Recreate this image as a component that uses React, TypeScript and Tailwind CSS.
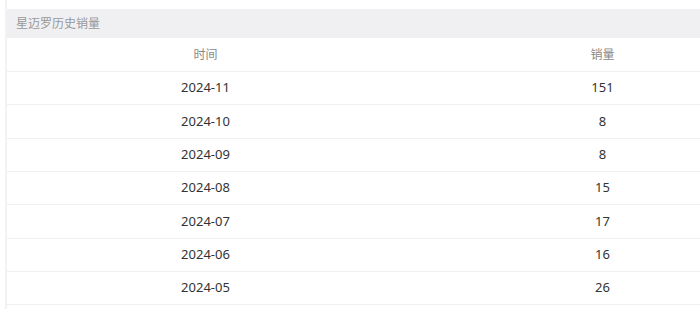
const rows: Array<[string, number]> = [
  ["2024-11", 151],
  ["2024-10", 8],
  ["2024-09", 8],
  ["2024-08", 15],
  ["2024-07", 17],
  ["2024-06", 16],
  ["2024-05", 26],
];

export default function App() {
  return (
    <div
      className="h-[309px] overflow-hidden bg-white"
      style={{ fontFamily: '"Noto Sans", "Noto Sans CJK SC", sans-serif' }}
    >
      <div className="ml-[5px] h-[309px] w-[796px] border-l-2 border-[#f2f2f2] pt-[9px]">
        <div className="flex h-[29px] items-center bg-[#f0f0f3] px-[9px] text-[12px] text-[#999]">
          星迈罗历史销量
        </div>
        <div className="grid h-[34px] grid-cols-2 items-center border-b border-[#f0f0f0] text-center text-[12px] text-[#888]">
          <div>时间</div>
          <div>销量</div>
        </div>
        {rows.map(([month, sales]) => (
          <div
            key={month}
            className="grid h-[33.33px] grid-cols-2 items-center border-b border-[#f0f0f0] text-center text-[13px] text-[#333]"
          >
            <div>{month}</div>
            <div>{sales}</div>
          </div>
        ))}
      </div>
    </div>
  );
}
